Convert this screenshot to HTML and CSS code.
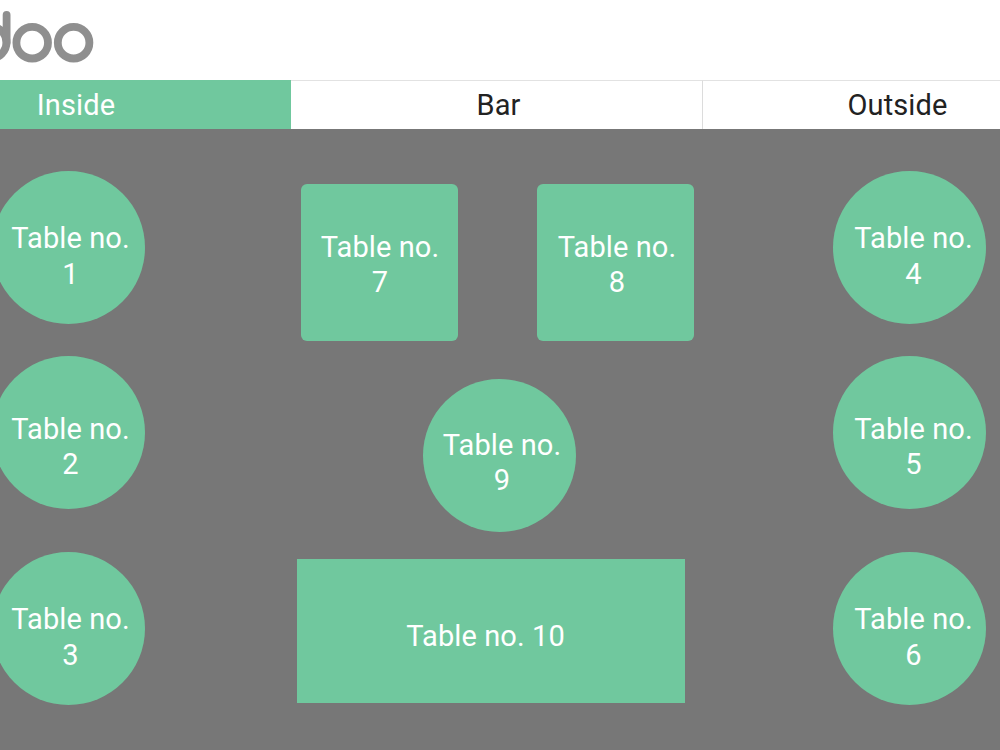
FILE: index.html
```html
<!DOCTYPE html>
<html lang="en">
    <head>
        <meta charset="utf-8">
        <title>Floor Plan</title>
        <link rel="stylesheet" href="styles.css">
    </head>
    <body>
        <header class="topbar">
            <svg class="logo" width="100" height="80" viewBox="0 0 100 80" role="img" aria-label="odoo">
                <circle cx="-9.3" cy="42.5" r="15.8"/>
                <path d="M6.6 15V42.5"/>
                <circle cx="32.2" cy="42.7" r="15.8"/>
                <circle cx="73.6" cy="42.7" r="15.8"/>
            </svg>
        </header>
        <nav class="floors">
            <button class="floor active">Inside</button>
            <button class="floor">Bar</button>
            <button class="floor">Outside</button>
        </nav>
        <main class="map">
            <button class="table round t1"><span>Table no.<br>1</span></button>
            <button class="table round t2"><span>Table no.<br>2</span></button>
            <button class="table round t3"><span>Table no.<br>3</span></button>
            <button class="table round t4"><span>Table no.<br>4</span></button>
            <button class="table round t5"><span>Table no.<br>5</span></button>
            <button class="table round t6"><span>Table no.<br>6</span></button>
            <button class="table square t7"><span>Table no.<br>7</span></button>
            <button class="table square t8"><span>Table no.<br>8</span></button>
            <button class="table round t9"><span>Table no.<br>9</span></button>
            <button class="table long t10"><span>Table no. 10</span></button>
        </main>
    </body>
</html>
```
FILE: styles.css
```css
*{
    box-sizing: border-box;
}
body{
    margin:0;
    height:100vh;
    display: flex;
    flex-direction: column;
    overflow: hidden;
    background-color: white;
    font-family: Roboto, sans-serif;
}
button{
    border:none;
    padding: 0;
    font-family: inherit;
    font-size: 29px;
    letter-spacing: 0.1px;
    line-height: 35.5px;
    cursor: pointer;
}
.topbar{
    height:80px;
    flex: none;
}
.logo{
    display: block;
    fill: none;
    stroke: #8f8f8f;
    stroke-width: 7.8;
    stroke-linecap: round;
}
/* floor tabs run past both sides of the window */
.floors{
    flex: none;
    display: grid;
    grid-template-columns: 431px 412px 390px;
    height:49px;
    margin-left: -140px;
}
.floor{
    background-color: white;
    color:#222;
    border-top: 1px solid #e2e2e2;
    border-right: 1px solid #dcdcdc;
    padding: 2px 0 0 4px;
}
.floor.active{
    background-color: #70c89e;
    border-color: #70c89e;
    color: white;
    padding-left: 2px;
}
.floor:last-child{
    padding-left: 0;
}
.map{
    flex: 1;
    position: relative;
    background-color: #777;
}
/* tables */
.table{
    position: absolute;
    display: flex;
    justify-content: center;
    align-items: center;
    background-color: #70c89e;
    color: white;
    white-space: nowrap;
}
.round{
    width: 153px;
    height:153px;
    border-radius: 50%;
}
.square{
    width: 157px;
    height:157px;
    border-radius: 6px;
    padding: 5px 0 0 1px;
}
.long{
    width: 388px;
    height:144px;
}
.t1, .t2, .t3{
    left:-8px;
    padding: 18px 0 0 4px;
}
.t4, .t5, .t6{
    left:833px;
    padding: 18px 0 0 8px;
}
.t1, .t4{
    top:42px;
}
.t2, .t5{
    top:227px;
    padding-top: 29px;
}
.t3, .t6{
    top:423px;
}
.t7{
    left:301px;
    top:55px;
}
.t8{
    left:537px;
    top:55px;
    padding-left: 3px;
}
.t9{
    left:423px;
    top:250px;
    padding: 15px 0 0 5px;
}
.t10{
    left:297px;
    top:430px;
    padding: 12px 11px 0 0;
}
```
